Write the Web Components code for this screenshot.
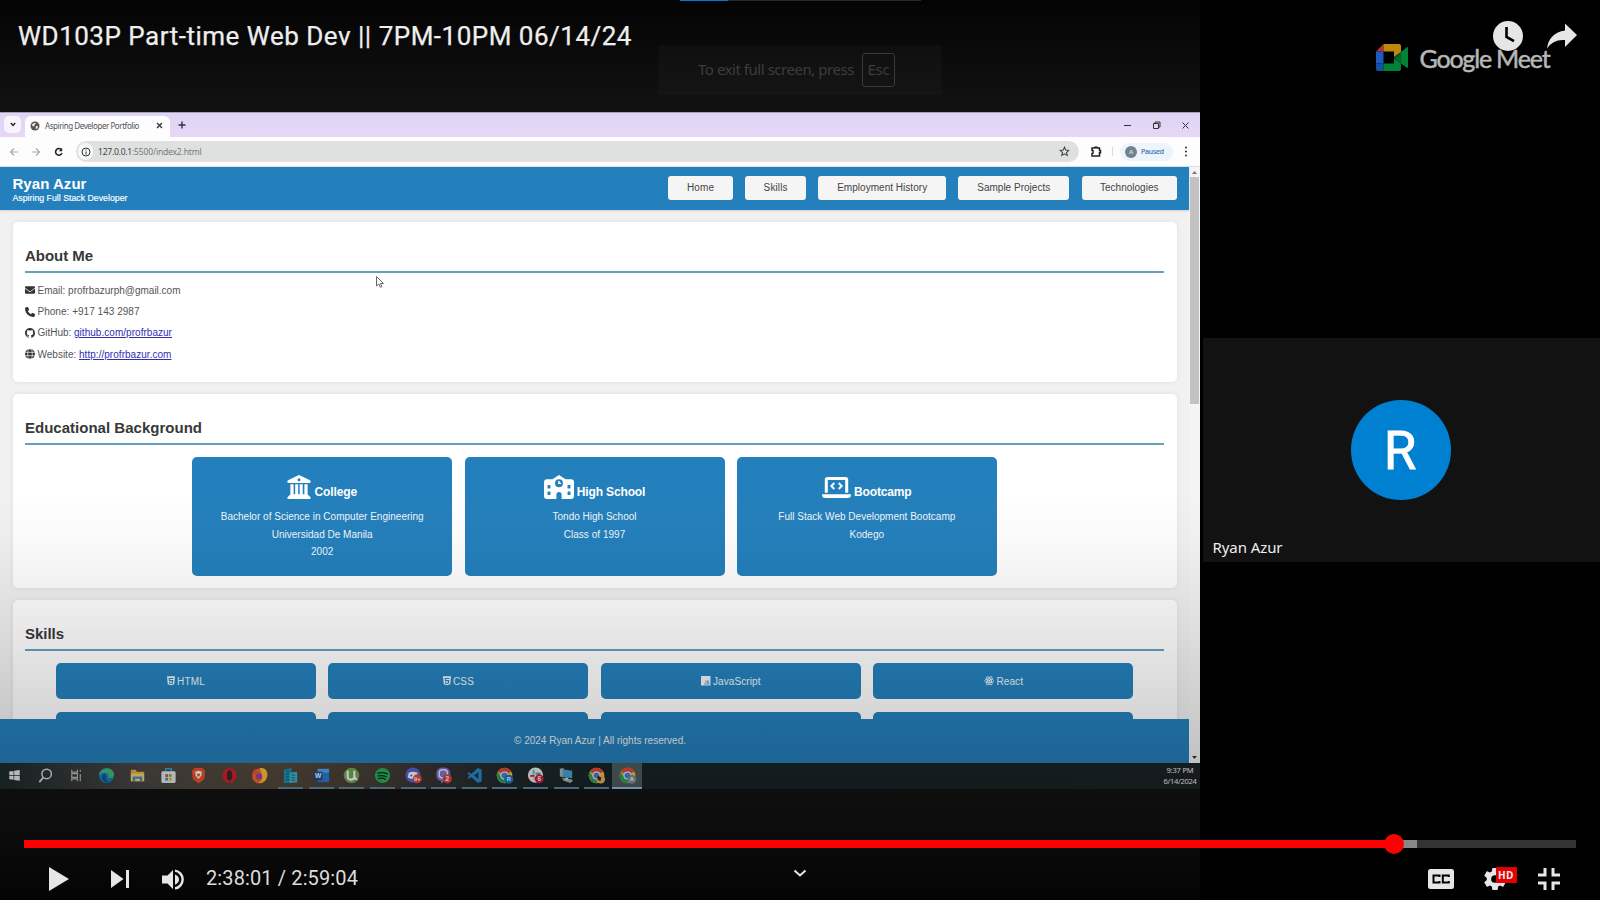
<!DOCTYPE html>
<html lang="en"><head><meta charset="utf-8"><title>WD103P Part-time Web Dev</title>
<style>html,body{margin:0;background:#000;overflow:hidden}body{width:1600px;height:900px;font-family:"Liberation Sans",Arial,sans-serif}</style>
</head><body><video-player></video-player>
<script>
const define=(name,html,after)=>customElements.define(name,class extends HTMLElement{
  constructor(){super();this.attachShadow({mode:'open'}).innerHTML=typeof html==='function'?html(this):html}
  connectedCallback(){after&&after(this)}
});
// A single line of text whose tracking is adjusted to a given width
define('fit-text','<style>:host{display:inline-block;white-space:pre}</style><slot></slot>',el=>{
  const w=+el.getAttribute('w');const n=[...el.textContent].length;
  const now=el.getBoundingClientRect().width;
  if(w&&now)el.style.letterSpacing=((w-now)/n)+'px';
});

const ICONS={
 envelope:['0 0 512 512','<path d="M48 64C21.5 64 0 85.5 0 112c0 15.1 7.1 29.3 19.2 38.4L236.8 313.6c11.4 8.5 27 8.5 38.4 0L492.8 150.4c12.1-9.1 19.2-23.3 19.2-38.4c0-26.5-21.5-48-48-48H48zM0 176V384c0 35.3 28.7 64 64 64H448c35.3 0 64-28.7 64-64V176L294.4 339.2c-22.8 17.1-54 17.1-76.8 0L0 176z"/>'],
 phone:['0 0 512 512','<path d="M164.9 24.6c-7.7-18.6-28-28.5-47.4-23.2l-88 24C12.1 30.2 0 46 0 64C0 311.4 200.6 512 448 512c18 0 33.8-12.1 38.6-29.5l24-88c5.3-19.4-4.6-39.7-23.2-47.4l-96-40c-16.3-6.8-35.2-2.1-46.3 11.6L304.7 368C234.3 334.7 177.3 277.7 144 207.3L193.3 167c13.7-11.2 18.4-30 11.6-46.3l-40-96z"/>'],
 github:['0 0 16 16','<path d="M8 0C3.58 0 0 3.58 0 8c0 3.54 2.29 6.53 5.47 7.59.4.07.55-.17.55-.38 0-.19-.01-.82-.01-1.49-2.01.37-2.53-.49-2.69-.94-.09-.23-.48-.94-.82-1.13-.28-.15-.68-.52-.01-.53.63-.01 1.08.58 1.23.82.72 1.21 1.87.87 2.33.66.07-.52.28-.87.51-1.07-1.78-.2-3.64-.89-3.64-3.95 0-.87.31-1.59.82-2.15-.08-.2-.36-1.02.08-2.12 0 0 .67-.21 2.2.82.64-.18 1.32-.27 2-.27s1.36.09 2 .27c1.53-1.04 2.2-.82 2.2-.82.44 1.1.16 1.92.08 2.12.51.56.82 1.27.82 2.15 0 3.07-1.87 3.75-3.65 3.95.29.25.54.73.54 1.48 0 1.07-.01 1.93-.01 2.2 0 .21.15.46.55.38A8.01 8.01 0 0 0 16 8c0-4.42-3.58-8-8-8z"/>'],
 globe:['0 0 20 20','<circle cx="10" cy="10" r="10"/><g fill="none" stroke="#fff" stroke-width="1.3"><ellipse cx="10" cy="10" rx="4.6" ry="10.5"/><path d="M0 6.7h20M0 13.3h20"/></g>'],
 college:['0 0 24 24','<path d="M12 0 1 5.2Q0 5.8.4 7.2.7 8 1.6 8h20.8q.9 0 1.200-.8.4-1.400-.6-2zM12 3.200a1.500 1.500 0 1 1 0 3 1.500 1.500 0 0 1 0-3M3.400 9.300v10.200Q2.300 20 1.800 21L.3 22.600Q0 24 1.300 24h21.400q1.300 0 1-1.400L22.200 21q-.5-1-1.600-1.500V9.300h-3.200v10h-1.700v-10h-3v10h-1.500v-10h-3v10H6.600v-10z" fill-rule="evenodd"/>'],
 school:['0 0 30 24','<path fill-rule="evenodd" d="M15 0 8.500 4.200H3Q0 4.200 0 7.200V21q0 3 3 3h9.400v-4.500a2.600 2.600 0 0 1 5.200 0V24H27q3 0 3-3V7.200q0-3-3-3h-5.500zM4.200 10h1.600q.7 0 .7.700v2.200q0 .7-.7.700H4.200q-.7 0-.7-.7v-2.200q0-.7.700-.7m0 6.500h1.600q.7 0 .7.700v2.200q0 .7-.7.700H4.200q-.7 0-.7-.7v-2.200q0-.7.700-.7m20-6.500h1.600q.7 0 .7.700v2.200q0 .7-.7.700h-1.600q-.7 0-.7-.7v-2.200q0-.7.700-.7m0 6.500h1.600q.7 0 .7.700v2.200q0 .7-.7.700h-1.600q-.7 0-.7-.7v-2.200q0-.7.700-.7M15 4.300a4 4 0 1 1 0 8 4 4 0 0 1 0-8m-.8 1.600v3.200h3V7.700h-1.500V5.900z"/>'],
 laptop:['0 0 29 22','<path fill-rule="evenodd" d="M5.500 0h18q2.700 0 2.700 2.700v13h-3V3H5.800v12.700h-3v-13Q2.800 0 5.500 0M.3 17.200h28.400q.3 0 .3.600 0 3.200-3.500 3.200h-22Q0 21 0 17.800q0-.6.300-.6"/><path d="m12.300 6-3 3 3 3M16.700 6l3 3-3 3" fill="none" stroke="currentColor" stroke-width="1.800"/>'],
 html5:['0 0 16 18','<path fill-rule="evenodd" d="M0 0h16l-1.500 16L8 18l-6.500-2zM3.300 3.300l.5 6.500h6.400l-.3 3-1.900.6-2-.6-.1-1.300H4l.2 2.800L8 15.500l3.900-1.200.6-6.700H5.700l-.1-2.200h7l.2-2.100z"/>'],
 js:['0 0 16 16','<path fill-rule="evenodd" d="M1 0h14q1 0 1 1v14q0 1-1 1H1q-1 0-1-1V1q0-1 1-1m6.800 7.500v5q0 .8-.8.800t-1-.8l-1 .7q.5 1.300 2 1.300 2 0 2-2v-5zm6.400 1q-.8-1.100-2.200-1.100-1.900.2-1.900 2 0 1.300 1.800 2 1.300.5 1.200 1.100-.2.800-1.200.7-.9 0-1.300-.9l-1 .7q.7 1.500 2.400 1.500 2.300-.1 2.300-2.100 0-1.400-1.900-2-1.200-.4-1.100-1 .2-.7.900-.7t1.100.6z"/>'],
 react:['0 0 20 18','<g fill="none" stroke="currentColor" stroke-width="1.500"><ellipse cx="10" cy="9" rx="9" ry="3.600"/><ellipse cx="10" cy="9" rx="9" ry="3.600" transform="rotate(60 10 9)"/><ellipse cx="10" cy="9" rx="9" ry="3.600" transform="rotate(120 10 9)"/></g><circle cx="10" cy="9" r="2"/>']
};
define('ui-icon',el=>{const [vb,b]=ICONS[el.getAttribute('name')];
 return `<style>:host{display:inline-block;flex:none}svg{display:block;width:100%;height:100%;fill:currentColor}</style><svg viewBox="${vb}">${b}</svg>`});

/* ---------- shared browser window ---------- */
define('browser-tabs',`<style>
:host{display:flex;height:25px;box-sizing:border-box;background:linear-gradient(#ddd5f3,#e7d7f7);padding:3px 10px 0 4px;align-items:flex-start;border-top:1px solid #a79fb4}
.dd{width:17px;height:17px;border-radius:5px;background:#f8f4fd;display:grid;place-items:center;margin-right:4px}
.tab{width:145px;height:22px;border-radius:6px 6px 0 0;background:#fdfcff;display:flex;align-items:center;box-sizing:border-box;padding:0 7px 3px 5px;font:8px "Noto Sans",sans-serif;color:#555}
.tab fit-text{margin-left:5px;flex:1}
.plus{margin:4px 0 0 7px}.win{margin:2px 0 0 auto;display:flex;gap:20px}svg{display:block}
</style>
<div class="dd"><svg width="6" height="5" fill="none" stroke="#222" stroke-width="1.400"><path d="m.8 1 2.200 2.500L5.200 1"/></svg></div>
<div class="tab"><svg width="10" height="10" viewBox="0 0 10 10"><circle cx="5" cy="5" r="4.500" fill="#555"/><path d="M2 3.500 4 2l2 .5L4.500 4 4 5.500 2.500 5zM6 5l2.300.3L7 8 5.500 7.500z" fill="#eee"/></svg><fit-text w="94">Aspiring Developer Portfolio</fit-text><span style="flex:1"></span><svg width="7" height="7" stroke="#333" stroke-width="1.300"><path d="m1 1 5 5m0-5L1 6"/></svg></div>
<svg class="plus" width="10" height="10" stroke="#3a2c4c" stroke-width="1.400"><path d="M5 1.500v7M1.500 5h7"/></svg>
<div class="win" ><svg width="9" height="14" stroke="#333"><path d="M1 7.500h7"/></svg><svg width="9" height="14" fill="none" stroke="#333"><path d="M1.500 5.500h5v5h-5zM3 5.500v-1.500h5v5H6.500"/></svg><svg width="9" height="14" stroke="#333"><path d="m1.500 4.500 6 6m0-6-6 6"/></svg></div>`);

define('browser-toolbar',`<style>
:host{display:flex;height:30px;background:#fdfdfe;align-items:center;padding:0 8px;box-sizing:border-box;border-bottom:1px solid #d7e1ea}
svg{display:block;flex:none}
.pill{margin-left:11px;width:1003px;height:21px;border-radius:11px;background:#dfe1e1;display:flex;align-items:center;box-sizing:border-box;padding:0 9px 0 2px;font:8.500px "Noto Sans",sans-serif;color:#777}
.i{width:15px;height:17px;border-radius:9px;background:#f6f7f7;display:grid;place-items:center;margin-right:5px}
.star{margin-left:auto}.ext{margin-left:10px}.div{width:1px;height:9px;background:#d5dbe2;margin:0 7px 0 9px}
.p{width:53px;height:18px;border-radius:9px;background:#edf4fb;display:flex;align-items:center;box-sizing:border-box;padding-left:5px;font:bold 7px "Noto Sans",sans-serif;color:#4c7ab8}
.a{width:12px;height:12px;border-radius:50%;background:#71838c;color:#cdd6da;display:grid;place-items:center;font-size:6px;margin-right:4px}
</style>
<svg width="12" height="10" fill="none" stroke="#aaa" stroke-width="1.200"><path d="M10 5H2.500m3.500-3.500L2.500 5 6 8.500"/></svg>
<svg style="margin-left:10px" width="12" height="10" fill="none" stroke="#aaa" stroke-width="1.200"><path d="M2 5h7.500M6 1.500 9.500 5 6 8.500"/></svg>
<svg style="margin-left:11px" width="12" height="10" fill="none" stroke="#222" stroke-width="1.500"><path d="M8.600 3A3.300 3.300 0 1 0 9 6"/><path d="M9.200.8v3.400H5.800z" fill="#222" stroke="none"/></svg>
<div class="pill"><span class="i"><svg width="10" height="10" viewBox="0 0 10 10" fill="none" stroke="#333"><circle cx="5" cy="5" r="4"/><path d="M5 4.500v3M5 2.500v1"/></svg></span><fit-text w="34" style="color:#444">127.0.0.1</fit-text><fit-text w="69.500">:5500/index2.html</fit-text>
<svg class="star" width="11" height="11" viewBox="0 0 11 11" fill="none" stroke="#444" stroke-width="1.100"><path d="m5.500 1.200 1.300 2.900 3 .3-2.300 2 .7 3-2.700-1.600-2.700 1.600.7-3-2.300-2 3-.3z"/></svg></div>
<svg class="ext" width="14" height="13" fill="none" stroke="#222" stroke-width="1.500"><path d="M3 3h3V2.300h2V3h2.500v2.500h1v2.300h-1V11H3V8.500l1-.3V5.500L3 5.300z"/></svg>
<div class="div"></div><div class="p"><span class="a">A</span><fit-text w="23" style="font-weight:400;-webkit-text-stroke:.2px #4c7ab8">Paused</fit-text></div>
<svg style="margin-left:10px" width="6" height="11" fill="#333"><circle cx="3" cy="1.500" r="1"/><circle cx="3" cy="5.500" r="1"/><circle cx="3" cy="9.500" r="1"/></svg>`);

define('site-header',`<style>
:host{display:flex;flex:none;height:43px;box-sizing:border-box;background:#2480bc;color:#fff;padding:0 12px 0 12.500px;box-shadow:0 1px 2px #0002;position:relative}
.b{padding-top:7.500px}.n{font:bold 15px/18px "Liberation Sans"}.s{font:8.750px/11px "Liberation Sans";-webkit-text-stroke:.15px #fff}b,span{display:block}
nav{margin-left:auto;display:flex;gap:12.300px;padding-top:9.300px}
nav div{height:24px;border-radius:3px;background:#f5f5f5;color:#444;font:10px/16px "Liberation Sans";text-align:center;display:grid;place-items:center}
</style><div class="b"><div class="n"><fit-text w="74">Ryan Azur</fit-text></div><div class="s"><fit-text w="115">Aspiring Full Stack Developer</fit-text></div></div>
<nav><div style="width:64.500px"><fit-text w="27">Home</fit-text></div><div style="width:61px"><fit-text w="24">Skills</fit-text></div><div style="width:127.500px"><fit-text w="90">Employment History</fit-text></div><div style="width:111px"><fit-text w="73">Sample Projects</fit-text></div><div style="width:95.500px"><fit-text w="58.500">Technologies</fit-text></div></nav>`);

define('page-section',el=>`<style>
:host{display:block;background:#fff;border-radius:5px;box-shadow:0 0 5px #00000014;box-sizing:border-box;padding:25px 12.500px 0;flex:none}
h2{margin:0 0 10.500px;font:bold 15px/18px "Liberation Sans";color:#383838;border-bottom:2px solid #65a0bb;padding-bottom:6px}
</style><h2><fit-text w="${el.getAttribute('w')}">${el.getAttribute('heading')}</fit-text></h2><slot></slot>`);

define('contact-row',el=>`<style>
:host{display:flex;align-items:center;height:21.250px;font:10px "Liberation Sans";color:#555}
ui-icon{width:10px;height:10px;color:#333;margin-right:2.500px}a{color:#2f2fb0;text-decoration:underline}
</style><ui-icon name="${el.getAttribute('icon')}"></ui-icon><slot></slot>`);

define('edu-card',el=>`<style>
:host{display:block;width:260px;height:119px;border-radius:5px;background:#2480bc;color:#f0f6fa;text-align:center;box-sizing:border-box;padding-top:18px}
h3{margin:0 0 6px;height:27px;display:flex;justify-content:center;align-items:flex-start;font:bold 12px/14px "Liberation Sans";color:#fff}
ui-icon{width:${el.getAttribute('iw')}px;height:${el.getAttribute('ih')}px;margin:${el.getAttribute('it')||0}px 3px 0 0}h3 fit-text{margin-top:10px}
div{font:10px/17.300px "Liberation Sans"}
</style><h3><ui-icon name="${el.getAttribute('icon')}"></ui-icon><fit-text w="${el.getAttribute('w')}">${el.getAttribute('heading')}</fit-text></h3><div><slot></slot></div>`);

define('skill-card',el=>`<style>
:host{display:flex;align-items:center;justify-content:center;width:260px;height:36px;border-radius:5px;background:#2480bc;color:#eef4f8;font:10px "Liberation Sans"}
ui-icon{width:${el.getAttribute('iw')||8}px;height:9.500px;margin-right:2.500px}</style>${el.getAttribute('icon')?`<ui-icon name="${el.getAttribute('icon')}"></ui-icon><slot></slot>`:''}`);

define('portfolio-page',`<style>
:host{display:flex;height:596px;background:#f1f1f2;overflow:hidden}
.v{width:1189px;display:flex;flex-direction:column}
main{flex:1;min-height:0;overflow:hidden;display:flex;flex-direction:column;gap:12.200px;padding:12.200px 12.500px 0}
.edu{display:flex;gap:12.300px;justify-content:center}
.contacts{margin-top:-4px}
.skills{display:grid;grid-template-columns:repeat(4,260px);gap:12.500px;justify-content:center}
footer{flex:none;height:44px;background:#2480bc;color:#e9f0f5;font:10px/43px "Liberation Sans";text-align:center;padding-left:11px}
.sb{width:11px;background:#f4f4f5;display:flex;flex-direction:column;align-items:center;box-sizing:border-box;padding:4px 0 4px}
.th{width:9px;height:227px;background:#c2c2c2;margin-top:2px}.sb svg:last-child{margin-top:auto}
</style><div class="v"><site-header></site-header><main>
<page-section heading="About Me" w="68" style="height:160px"><div class="contacts">
<contact-row icon="envelope"><fit-text w="143">Email: profrbazurph@gmail.com</fit-text></contact-row>
<contact-row icon="phone"><fit-text w="102">Phone: +917 143 2987</fit-text></contact-row>
<contact-row icon="github"><fit-text w="36.500">GitHub: </fit-text><fit-text w="98" style="color:#2f2fb0;text-decoration:underline">github.com/profrbazur</fit-text></contact-row>
<contact-row icon="globe"><fit-text w="41.500">Website: </fit-text><fit-text w="92.500" style="color:#2f2fb0;text-decoration:underline">http://profrbazur.com</fit-text></contact-row></div></page-section>
<page-section heading="Educational Background" w="177" style="height:193.500px"><div class="edu" style="margin-top:12px">
<edu-card icon="college" iw="24" ih="24" heading="College" w="42.500"><fit-text w="203">Bachelor of Science in Computer Engineering</fit-text><br><fit-text w="101">Universidad De Manila</fit-text><br><fit-text w="22.500">2002</fit-text></edu-card>
<edu-card icon="school" iw="30" ih="24" heading="High School" w="68.500"><fit-text w="84">Tondo High School</fit-text><br><fit-text w="61.500">Class of 1997</fit-text></edu-card>
<edu-card icon="laptop" iw="29" ih="22" it="1.500" heading="Bootcamp" w="57.500"><fit-text w="177">Full Stack Web Development Bootcamp</fit-text><br><fit-text w="34.500">Kodego</fit-text></edu-card></div></page-section>
<page-section heading="Skills" w="39" style="height:220px"><div class="skills" style="margin-top:12px">
<skill-card icon="html5"><fit-text w="28">HTML</fit-text></skill-card><skill-card icon="html5"><fit-text w="21">CSS</fit-text></skill-card><skill-card icon="js" iw="9.500"><fit-text w="47.500">JavaScript</fit-text></skill-card><skill-card icon="react" iw="10.500"><fit-text w="26.500">React</fit-text></skill-card>
<skill-card></skill-card><skill-card></skill-card><skill-card></skill-card><skill-card></skill-card></div></page-section>
</main><footer><fit-text w="172">© 2024 Ryan Azur | All rights reserved.</fit-text></footer></div>
<div class="sb"><svg width="7" height="4" fill="#777"><path d="M3.500 0 6 3H1z"/></svg><div class="th"></div><svg width="7" height="4" fill="#333"><path d="M3.500 4 1 1h5z"/></svg></div>`);

/* ---------- taskbar ---------- */
const chrome=(badge)=>`<circle cx="10" cy="10" r="8.200" fill="#f6c431"/><path d="M10 10 2.900 5.900A8.200 8.200 0 0 1 17.100 5.900z" fill="#de4a3c"/><path d="M2.900 5.900A8.200 8.200 0 0 0 10 18.200l3.500-6.200L6.500 12z" fill="#33a35a"/><circle cx="10" cy="10" r="4.100" fill="#fff"/><circle cx="10" cy="10" r="3.200" fill="#3f82e8"/>${badge}`;
const letter=(x,y,s,t)=>`<text x="${x}" y="${y}" font-size="${s}" fill="#fff" text-anchor="middle" font-family="Liberation Sans" font-weight="bold">${t}</text>`;
const APPS=[
 ['<path fill="#eee" d="M4.500 5.800 9 5.200v4.300H4.500zM9.700 5l5.800-.8v5.300H9.700zM4.500 10.300H9v4.300l-4.500-.6zM9.700 10.300h5.800v5.300l-5.800-.8z"/>'],
 ['<circle cx="11.200" cy="8.300" r="5" fill="none" stroke="#ddd" stroke-width="1.600"/><path d="m7.800 12-4.300 5" stroke="#ddd" stroke-width="1.800"/>'],
 ['<path d="M5 4v2.500h6V4M5 16v-2.500h6V16M5 8h6v4H5zM14 4v2m0 2.500V16" fill="none" stroke="#bbb" stroke-width="1.200"/>'],
 ['<circle cx="10" cy="10" r="8" fill="#167fc4"/><path d="M2.200 10C3 1 17 0 18 9c0 3.500-4 4.500-6.300 3.200C14 8 7 4.500 2.200 10" fill="#42bd7d"/><path d="M8 7.500C2 12 7 18 13.500 17.200 9 15 9 13 9.500 11z" fill="#115897"/>'],
 ['<path d="M3 4h5l1.500 2H17v10H3z" fill="#e9b13d"/><path d="M3 8h14v8H3z" fill="#f7d678"/><path d="M5 11h10v5h-2.500v-2.500h-5V16H5z" fill="#3f8fd0"/>'],
 ['<path d="M7 6V3h6v3" fill="none" stroke="#31a3da" stroke-width="1.600"/><rect x="2.500" y="5.500" width="15" height="12.500" rx="1.500" fill="#e8edf0"/><path fill="#e15a3a" d="M6.500 8.500h3v3h-3z"/><path fill="#7bb93c" d="M10.300 8.500h3v3h-3z"/><path fill="#2c9bd9" d="M6.500 12.300h3v3h-3z"/><path fill="#f2b92e" d="M10.300 12.300h3v3h-3z"/>'],
 ['<path d="M6 2h8l3 3-1 9-6 4.500L4 14 3 5z" fill="#f0532b"/><path d="m6.500 6 3.500-1 3.500 1-.5 4-2 2.500-1 1-1-1L7 10z" fill="#fff"/><path d="m8 7.500 2 1 2-1-1 3.500H9z" fill="#f0532b"/>'],
 ['<ellipse cx="10" cy="10" rx="7.500" ry="8" fill="#d8222c"/><ellipse cx="10" cy="10" rx="2.900" ry="5.400" fill="#382b26"/>'],
 ['<circle cx="10" cy="10.500" r="7.800" fill="#f5672e"/><path d="M10 2.500c7-2 10 5.500 7.500 10-1 4-6 6-9 5 6-2 5-8 1.500-15" fill="#ffc23a"/><circle cx="9.500" cy="11" r="3.300" fill="#9c46a0"/><path d="M2.500 7.500 5 3l2 3 2 1-3 2z" fill="#f5503e"/>'],
 ['<path fill="#1c92b8" d="m3 4 8-2v16H3z"/><path fill="#40b9d5" d="m9 7 8-1v11l-8 1z"/><path stroke="#0d6483" d="M5 5.500h4M5 8.500h4M5 11.500h4M5 14.500h4M11 9.500h4M11 12.500h4M11 15h4"/>',1],
 ['<path fill="#2b7cd3" d="M6 3h12v14H6z"/><path fill="#51a5ee" d="M6 3h12v4H6z"/><path fill="#1a4d9c" d="M2 6h9v9H2z"/>'+letter(6.500,13,7,'W'),1],
 ['<circle cx="10" cy="10" r="8.200" fill="#74a957"/><path d="M6 5v6c0 5 7 4 7 0V5m0 5q0 4 3 4" fill="none" stroke="#fff" stroke-width="2.200"/>',1],
 ['<circle cx="10" cy="10" r="8" fill="#25b659"/><path d="M5 7.500q5-1.500 10 .8M5.500 10.500q4.500-1.200 8.500.8M6 13.200q4-1 7 .7" fill="none" stroke="#14261b" stroke-width="1.400" stroke-linecap="round"/>',1],
 ['<circle cx="9.500" cy="9.500" r="8" fill="#5863d4"/><path d="M5 7q4.500-2 9 0l1 5-3 1.500h-5L4 12z" fill="#fff"/><circle cx="7.700" cy="10" r="1.100" fill="#5863d4"/><circle cx="14" cy="13.500" r="4.700" fill="#dd4a45"/>'+letter(14,15.800,6,'9+'),1],
 ['<rect x="2.500" y="1.500" width="14.500" height="14.500" rx="6" fill="#8375d6"/><path d="m7 15 1 4 3-4z" fill="#8375d6"/><rect x="5.500" y="4" width="8.500" height="8.500" rx="3" fill="none" stroke="#fff" stroke-width="1.300"/><circle cx="14" cy="13.500" r="4.800" fill="#df4239"/>'+letter(14,16.200,7,'2'),1],
 ['<path d="m13.500 2 4 1.800v12.400l-4 1.800-7-6.500-2.500 2L2.500 12.500 5 10 2.500 7.500 4 6.500l2.500 2zM14 6.500 9.500 10l4.500 3.500z" fill="#258bd0" fill-rule="evenodd"/>',1],
 [chrome('<circle cx="14.500" cy="14" r="4.800" fill="#187abf"/>'+letter(14.500,16.200,6,'R')),1],
 ['<circle cx="10" cy="9.500" r="8" fill="#eee"/><path d="M8 4v5" stroke="#36c5f0" stroke-width="2"/><path d="M10 8h5" stroke="#2eb67d" stroke-width="2"/><path d="M4.500 10.500H9" stroke="#e01e5a" stroke-width="2"/><path d="M9 11v4" stroke="#ecb22e" stroke-width="2"/><circle cx="14" cy="13.500" r="4.700" fill="#c51f48"/>'+letter(14,16,7,'6'),1],
 ['<path d="m3 3 4-1v10l-4-1z" fill="#a9b4b9"/><path d="m6 3.500 10 1.500v8L6 11.500z" fill="#46a4da"/><path d="m5 12.500 10 1.500 2 1.500-3 2.500-7-2.500z" fill="#9fb3a8"/><path d="m9 12 3 .5-1 2-3-.5z" fill="#dbe3e6"/>',1],
 [chrome('<circle cx="14.500" cy="14" r="4.500" fill="#e9b268"/><path d="m11 10 4 2-1 4-3-2z" fill="#36251c"/>'),1],
 [chrome('<circle cx="14.500" cy="14" r="4.700" fill="#7d929d"/>'+letter(14.500,16.200,6,'A')),2]];
define('task-bar',`<style>
:host{display:flex;height:26px;background:linear-gradient(90deg,#1e2a2c,#4b4845 12%,#55493b 23%,#463c37 32%,#222a2e 41%,#172327 50%,#1b2326);color:#eee}
.c{width:30.650px;display:flex;flex-direction:column;align-items:center;box-sizing:border-box;padding-top:3px;height:25.500px;position:relative;left:-.5px}
.o{border-bottom:2px solid #5f8aa0;width:25px;margin:0 2.825px}.x{background:#505c60;width:30px;margin:0;border-bottom-color:#88c0df}
svg{width:19px;height:19px;flex:none}
.t{margin-left:auto;width:40px;text-align:center;font:7.500px/11.200px "Noto Sans",sans-serif;padding-top:1.500px}
</style>${APPS.map(([g,o])=>`<div class="c ${o?'o':''} ${o===2?'x':''}"><svg viewBox="0 0 20 20">${g}</svg></div>`).join('')}<div class="t"><fit-text w="27">9:37 PM</fit-text><br><fit-text w="33">6/14/2024</fit-text></div>`);

define('shared-screen',`<style>:host{display:block;width:1200px;height:900px;background:#121212;box-sizing:border-box;padding-top:112px;position:relative}
.shade{position:absolute;inset:0;background:linear-gradient(#000000c8,#00000000 112px,#00000000 490px,#00000005 540px,#0000000f 590px,#00000024 690px,#00000034 760px,#00000048 820px,#000000c8 900px)}
.cur{position:absolute;left:375px;top:275px}</style>
<browser-tabs></browser-tabs><browser-toolbar></browser-toolbar><portfolio-page></portfolio-page><task-bar></task-bar>
<svg class="cur" width="10" height="14" fill="#fff" stroke="#666"><path d="M1.500 1.500v9.500l2.300-2 1.500 3.300 1.600-.7L5.500 8.500h3z"/></svg><div class="shade"></div>`);

/* ---------- meeting column ---------- */
define('meet-column',`<style>:host{display:flex;flex-direction:column;width:400px;height:900px;background:#000}
.logo{display:flex;height:337.500px;box-sizing:border-box;padding:44px 0 0 176px;font:25px/30px "Lato",sans-serif;color:#b7b7b7}
.logo fit-text{margin:-1.500px 0 0 11.500px;-webkit-text-stroke:.5px #b7b7b7;height:30px}
.tile{margin-left:3px;height:224.500px;background:#121212;display:grid;place-items:center;position:relative}
.av{width:99.500px;height:99.500px;border-radius:50%;background:#0080d0;color:#fff;font:53px/102px Roboto,sans-serif;text-align:center;text-indent:-2px;-webkit-text-stroke:.8px #fff;position:relative;left:-.5px}
.nm{position:absolute;left:9.500px;bottom:4px;font:15px/22px "Noto Sans",sans-serif;color:#eee}</style>
<div class="logo"><svg width="32" height="27" viewBox="0 0 32 27"><path d="M0 7.500 7.500 0v7.500z" fill="#b93329"/><path d="M7.500 0H23q2 0 2 2v6l-7 5V7.500H7.500z" fill="#bd880c"/><path d="M0 7.500h7.500v12H0z" fill="#1d5bc0"/><path d="M0 19.500h7.500V27H2q-2 0-2-2z" fill="#1550a5"/><path d="M7.500 19.500H18V14l7 5.500V25q0 2-2 2H7.500z" fill="#008238"/><path d="m18 13.500 7-5.500v11.500z" fill="#006427"/><path d="m25 8 5.500-4.500Q32 2.500 32 4v19q0 1.500-1.500.5L25 19.500z" fill="#008238"/></svg><fit-text w="130">Google Meet</fit-text></div>
<div class="tile"><div class="av">R</div><div class="nm"><fit-text w="70">Ryan Azur</fit-text></div></div>`);

/* ---------- player chrome ---------- */
define('player-top',`<style>:host{position:absolute;inset:0 0 auto 0;display:flex;align-items:flex-start;padding:20px 23px 0 18px;color:#eee}
.t{font:26px/32px Roboto,sans-serif;-webkit-text-stroke:.25px #eee}.a{margin-left:auto;display:flex;gap:24px;padding-top:1px}svg{display:block}</style>
<fit-text class="t" w="614">WD103P Part-time Web Dev || 7PM-10PM 06/14/24</fit-text>
<div class="a"><svg width="30" height="30"><circle cx="15" cy="15" r="15" fill="#e6e6e6"/><path d="M13.500 6v10l7.500 4.200" fill="none" stroke="#000" stroke-width="2.600"/></svg>
<svg width="30" height="30" fill="#e6e6e6"><path d="M18 2.500 30 14 18 26v-7Q6 18 0 27.500 2 12 18 9.500z"/></svg></div>`);
define('fullscreen-hint',`<style>:host{position:absolute;left:658px;top:45px;width:284px;height:50px;box-sizing:border-box;background:#ffffff06;display:flex;align-items:center;padding-left:40px;color:#3d3d3d;font:15px "Noto Sans",sans-serif}
fit-text{position:relative;top:-1px}
.k{width:33px;height:34px;border:1px solid #3a3a3a;border-radius:3px;box-sizing:border-box;display:grid;place-items:center;margin-left:8px}</style>
<fit-text w="156">To exit full screen, press</fit-text><div class="k"><fit-text w="22">Esc</fit-text></div>`);
define('load-strip',`<style>:host{position:absolute;left:680px;top:0;width:241px;height:1px;background:#272727}i{display:block;width:48px;height:1px;background:#0078d4}</style><i></i>`);
define('player-controls',`<style>:host{position:absolute;inset:auto 0 0 0;height:60px;color:#e6e6e6}
.bar{height:8px;margin:0 24px;display:flex;background:#333}.p{width:1369.500px;background:#f00;position:relative}
.p::after{content:"";position:absolute;right:-10px;top:-6px;width:20px;height:20px;border-radius:50%;background:#f00}
.b{width:23px;background:#888}.row{display:flex;align-items:center;height:30px;padding:0 40px 0 49px;margin-top:16px}
svg{display:block;flex:none;fill:currentColor}.g{margin-left:auto}.time{font:20px/24px Roboto,sans-serif;margin-left:22px;color:#ddd;position:relative;top:-1px}
.gear{display:flex;margin-left:30px;width:34px;position:relative}.hd{position:absolute;left:11.500px;top:-1px;width:21px;height:16px;border-radius:1px;background:#e60000;color:#eee;font:bold 10px/16px "Open Sans",sans-serif;text-align:center}</style>
<div class="bar"><div class="p"></div><div class="b"></div></div>
<div class="row"><svg width="20" height="24"><path d="M0 0v24l20-12z"/></svg><svg style="margin-left:42px" width="18" height="18"><path d="M0 0v18l12.500-9zM15 0h3v18h-3z"/></svg>
<svg style="margin-left:33px" width="22" height="21"><path d="M0 6.500h5.500L11 1v19l-5.500-5.500H0zM13 5.500q4 1.500 4 5t-4 5z"/><path d="M13 1.600a9 9 0 0 1 0 17.800" fill="none" stroke="currentColor" stroke-width="2.400"/></svg>
<fit-text class="time" w="152">2:38:01 / 2:59:04</fit-text>
<svg style="margin:0 0 11px 435px" width="14" height="9"><path d="m1.500 1.500 5.500 5 5.500-5" fill="none" stroke="currentColor" stroke-width="2"/></svg>
<svg class="g" width="26" height="20"><rect width="26" height="20" rx="2.500"/><path d="M11.500 8V6.500h-6v7h6V12M20.800 8V6.500h-6v7h6V12" fill="none" stroke="#000" stroke-width="2"/></svg>
<div class="gear"><svg width="22" height="22" viewBox="2 2 20 20"><path d="M19.430 12.980c.04-.32.070-.64.070-.98s-.03-.66-.070-.98l2.110-1.650c.19-.15.24-.42.12-.64l-2-3.460c-.12-.22-.39-.3-.61-.22l-2.490 1c-.52-.4-1.080-.73-1.690-.98l-.38-2.650C14.460 2.180 14.250 2 14 2h-4c-.25 0-.46.18-.49.42l-.38 2.650c-.61.25-1.170.59-1.690.98l-2.490-1c-.23-.09-.49 0-.61.22l-2 3.460c-.13.22-.070.49.12.64l2.110 1.650c-.04.32-.070.65-.070.98s.03.66.070.98l-2.110 1.650c-.19.15-.24.42-.12.64l2 3.460c.12.22.39.3.61.22l2.490-1c.52.4 1.080.73 1.690.98l.38 2.650c.03.24.24.42.49.42h4c.25 0 .46-.18.49-.42l.38-2.650c.61-.25 1.170-.59 1.690-.98l2.490 1c.23.09.49 0 .61-.22l2-3.460c.12-.22.070-.49-.12-.64zM12 15.500a3.500 3.500 0 1 1 0-7 3.500 3.500 0 0 1 0 7z"/></svg><span class="hd"><fit-text w="16">HD</fit-text></span></div>
<svg style="margin-left:20px" width="22" height="22"><path d="M5.500 0h3v8.500H0v-3h5.500zM13.500 0h3v5.500H22v3h-8.500zM0 13.500h8.500V22h-3v-5.500H0zM13.500 13.500H22v3h-5.500V22h-3z"/></svg></div>`);
define('video-player',`<style>:host{display:flex;position:relative;width:1600px;height:900px;overflow:hidden}</style>
<shared-screen></shared-screen><meet-column></meet-column><fullscreen-hint></fullscreen-hint><load-strip></load-strip><player-top></player-top><player-controls></player-controls>`);
</script></body></html>
